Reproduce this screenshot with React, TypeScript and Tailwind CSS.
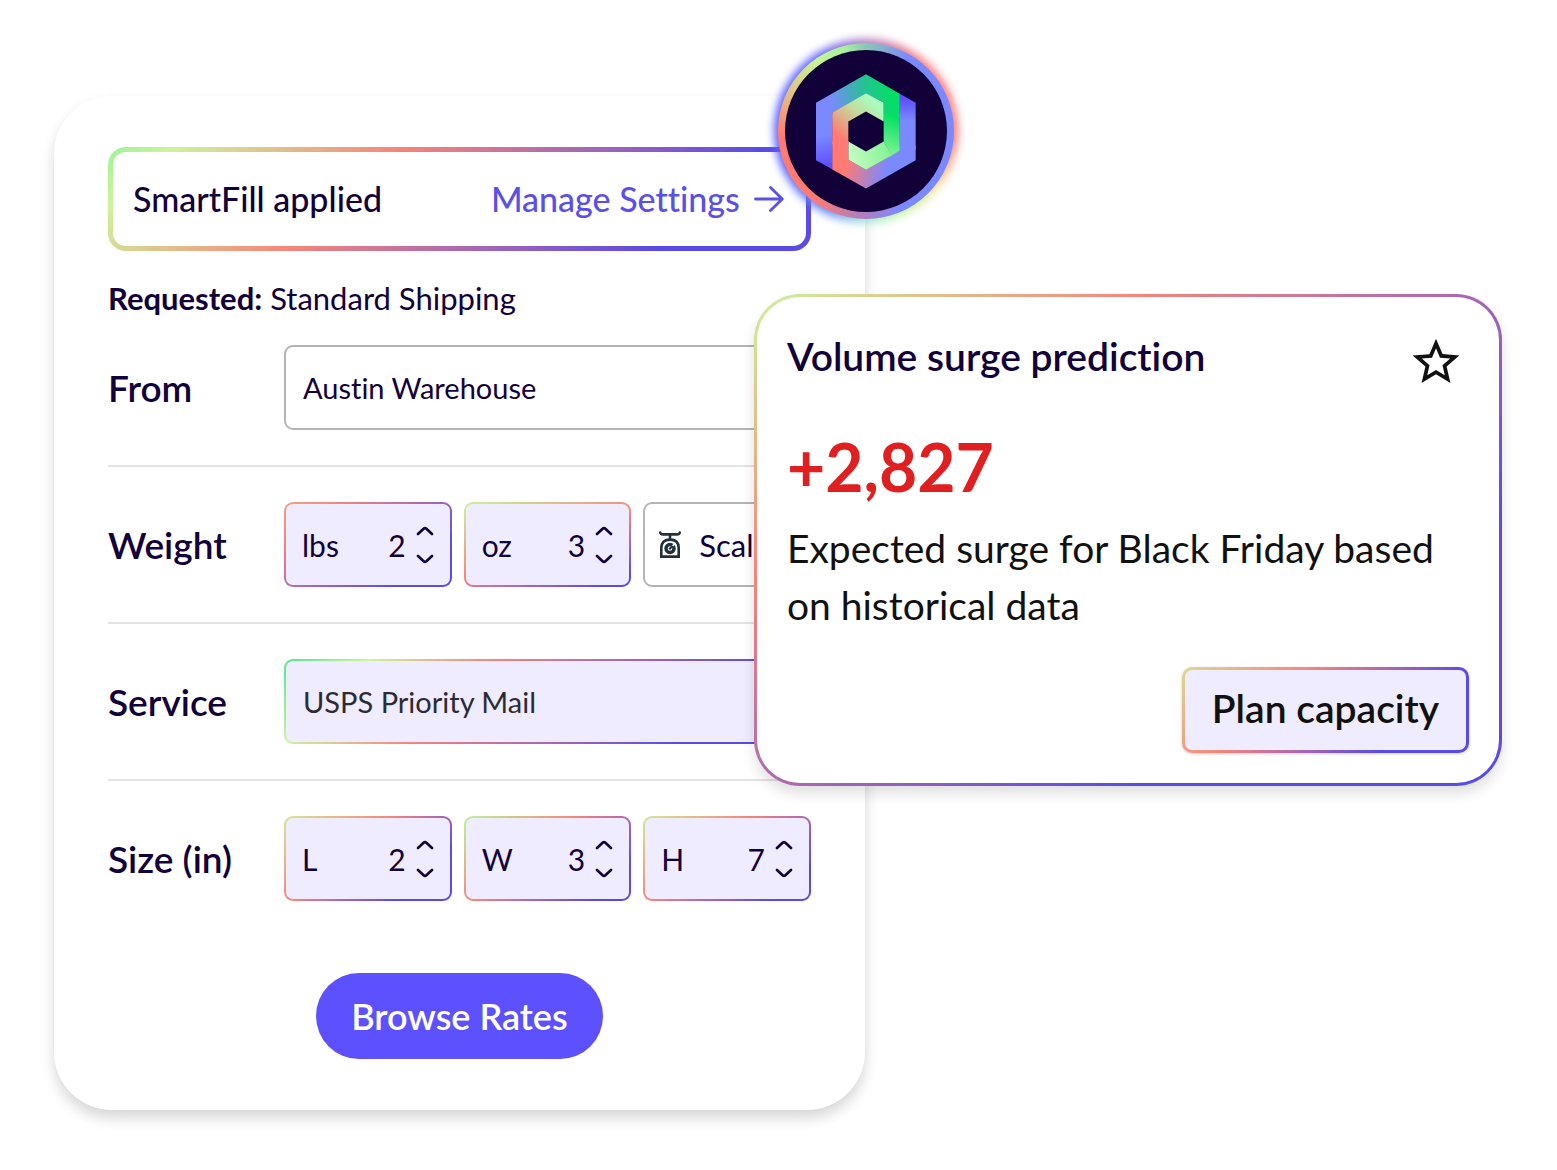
import { useState, type ReactNode } from "react";
import { MdStarOutline } from "react-icons/md";

const STEPPER_BG = {
  lbs: "[background:linear-gradient(#efecff,#efecff)_padding-box,linear-gradient(145deg,#efa582,#f5857a_20%,#5b4be6_80%)_border-box]",
  oz: "[background:linear-gradient(#efecff,#efecff)_padding-box,linear-gradient(158deg,#c8f596,#f5857a_50%,#5b4be6_92%)_border-box]",
  length: "[background:linear-gradient(#efecff,#efecff)_padding-box,linear-gradient(140deg,#d6e896,#f5857a_40%,#5b4be6_78%)_border-box]",
  width: "[background:linear-gradient(#efecff,#efecff)_padding-box,linear-gradient(140deg,#b8f594,#f5857a_42%,#5b4be6_84%)_border-box]",
  height: "[background:linear-gradient(#efecff,#efecff)_padding-box,linear-gradient(140deg,#d0ea98,#f5857a_40%,#5b4be6_84%)_border-box]",
};

interface StepperProps {
  id: keyof typeof STEPPER_BG;
  label: string;
  initial: number;
}

function Chevron({ down = false }: { down?: boolean }) {
  return (
    <svg viewBox="0 0 18 10" className="h-[10px] w-[18px]" fill="none" stroke="currentColor" strokeWidth="2.6" strokeLinecap="round">
      <path d={down ? "M2 2L7.6 7.3Q9 8.6 10.4 7.3L16 2" : "M2 8L7.6 2.7Q9 1.4 10.4 2.7L16 8"} />
    </svg>
  );
}

function Stepper({ id, label, initial }: StepperProps) {
  const [value, setValue] = useState(initial);

  return (
    <div className={`flex h-[85px] min-w-0 items-center rounded-[9px] border-2 border-transparent px-4 ${STEPPER_BG[id]}`}>
      <label htmlFor={id} className="text-[30px] leading-10">
        {label}
      </label>
      <input
        id={id}
        type="text"
        inputMode="numeric"
        value={value}
        onChange={(e) => setValue(Number(e.target.value) || 0)}
        className="min-w-0 flex-1 bg-transparent text-right text-[30px] leading-10 outline-none"
      />
      <div className="ml-[10px] flex flex-col gap-[18px]">
        <button type="button" aria-label={`Increase ${label}`} onClick={() => setValue(value + 1)}>
          <Chevron />
        </button>
        <button type="button" aria-label={`Decrease ${label}`} onClick={() => setValue(Math.max(0, value - 1))}>
          <Chevron down />
        </button>
      </div>
    </div>
  );
}

function ScaleIcon() {
  return (
    <svg viewBox="0 0 22 28" className="h-[28px] w-[22px] shrink-0" fill="none" stroke="#22303a" strokeWidth="2.6">
      <path d="M1.3 1.6Q1.6 3.4 4 3.4H18Q20.4 3.4 20.7 1.6" strokeLinecap="round" />
      <path d="M11 3.5V8" />
      <path d="M2.3 25.6V17Q2.3 8.6 11 8.6Q19.7 8.6 19.7 17V25.6Z" />
      <circle cx="11" cy="17.5" r="4" strokeWidth="3.4" />
      <path d="M11.5 17L16.5 12" stroke="#fff" strokeWidth="1.6" />
      <path d="M10.2 18.3L13.6 14.9" strokeWidth="2" />
    </svg>
  );
}

function HexLogo() {
  return (
    <svg viewBox="168 160 300 344" className="relative h-[115px] w-[100px]" aria-hidden="true">
      <defs>
        <linearGradient id="g-top" gradientUnits="userSpaceOnUse" x1="215" y1="265" x2="395" y2="215">
          <stop offset="0" stopColor="#7b89ff" />
          <stop offset="0.55" stopColor="#2bbd9c" />
          <stop offset="1" stopColor="#02e063" />
        </linearGradient>
        <linearGradient id="g-left" gradientUnits="userSpaceOnUse" x1="180" y1="345" x2="200" y2="435">
          <stop offset="0" stopColor="#7b89ff" />
          <stop offset="1" stopColor="#5d50ff" />
        </linearGradient>
        <linearGradient id="g-green" gradientUnits="userSpaceOnUse" x1="400" y1="285" x2="360" y2="410">
          <stop offset="0" stopColor="#02e063" />
          <stop offset="1" stopColor="#93f69b" />
        </linearGradient>
        <linearGradient id="g-hook" gradientUnits="userSpaceOnUse" x1="400" y1="370" x2="270" y2="400">
          <stop offset="0" stopColor="#7cf28d" />
          <stop offset="1" stopColor="#c3fac4" />
        </linearGradient>
        <linearGradient id="g-coral" gradientUnits="userSpaceOnUse" x1="240" y1="350" x2="335" y2="240">
          <stop offset="0" stopColor="#ff7a72" />
          <stop offset="0.6" stopColor="#c9d79b" />
          <stop offset="1" stopColor="#a9fcbf" />
        </linearGradient>
        <linearGradient id="g-bottom" gradientUnits="userSpaceOnUse" x1="265" y1="400" x2="385" y2="430">
          <stop offset="0" stopColor="#ff7a72" />
          <stop offset="1" stopColor="#7b89ff" />
        </linearGradient>
        <linearGradient id="g-right" gradientUnits="userSpaceOnUse" x1="445" y1="235" x2="445" y2="300">
          <stop offset="0" stopColor="#5d50ff" />
          <stop offset="1" stopColor="#7b89ff" />
        </linearGradient>
      </defs>
      <path fill="url(#g-left)" d="M168 280H218V446L168 418Z" />
      <path fill="url(#g-bottom)" d="M217 446V360H265V417L318 446L418 389V375H467V418L318 503Z" />
      <path fill="url(#g-right)" d="M418 218L467 246V385H418Z" />
      <path fill="url(#g-top)" d="M168 300V246L318 160L419 219V290H371V245L318 218L217 276V300Z" />
      <path fill="url(#g-green)" d="M371 279H419V390L395 404L371 362Z" />
      <path fill="url(#g-hook)" d="M371 362L318 392L265 362V417L318 447L396 403Z" />
      <path fill="url(#g-coral)" d="M217 371V275L318 217L371 245V302L318 272L265 302V371Z" />
    </svg>
  );
}

function BrandBadge() {
  return (
    <div className="absolute top-[-53px] right-[-89px] flex h-[176px] w-[176px] items-center justify-center">
      <span className="absolute -inset-1 rounded-full blur-[4px] [background:conic-gradient(#b07ac0,#ff7a7a_40deg,#ff7a7a_95deg,#f2e29a_130deg,#c3f7a8_155deg,#9fe5d5_180deg,#6b8cff_205deg,#5b62ff_250deg,#5b62ff_325deg,#b07ac0)]" />
      <span className="absolute inset-0 rounded-full [background:conic-gradient(#8bc7b4,#7b89ff_30deg,#7b89ff_155deg,#b27db8_185deg,#ff7a72_215deg,#ff7a72_265deg,#e5bd83_295deg,#c9f594_325deg,#a6f0a0_345deg,#8bc7b4)]" />
      <span className="absolute inset-[7px] rounded-full bg-[#120038]" />
      <HexLogo />
    </div>
  );
}

function FieldRow({ label, htmlFor, children }: { label: string; htmlFor: string; children: ReactNode }) {
  return (
    <div className="flex items-center border-b-2 border-[#e3e3e3] py-[35px] first:pt-0 last:border-b-0 last:pb-0">
      <label htmlFor={htmlFor} className="w-[176px] shrink-0 text-[37px] leading-10 font-semibold">
        {label}
      </label>
      <div className="min-w-0 flex-1">{children}</div>
    </div>
  );
}

function ShippingForm() {
  return (
    <form
      onSubmit={(e) => e.preventDefault()}
      className="relative w-[56%] shrink-0 rounded-[58px] bg-white px-[54px] pt-[51px] pb-[51px] shadow-[0_8px_14px_rgba(0,0,0,0.16)]"
    >
      <div className="flex h-[104px] items-center justify-between rounded-[18px] border-[5px] border-transparent pr-[22px] pl-5 [background:linear-gradient(#fff,#fff)_padding-box,linear-gradient(138deg,#9cf398,#cdf39b_8%,#f5857a_36%,#5b4be6_80%)_border-box]">
        <span className="text-[34px] leading-10 font-medium">SmartFill applied</span>
        <a href="#settings" className="flex items-center gap-[14px] text-[34px] leading-10 font-medium text-[#5b4fe9]">
          Manage Settings
          <svg viewBox="0 0 30 26" className="h-[26px] w-[30px]" fill="none" stroke="currentColor" strokeWidth="2.8" strokeLinecap="round" strokeLinejoin="round">
            <path d="M1.500 13H28M16.500 1.500L28.300 13L16.500 24.500" />
          </svg>
        </a>
      </div>

      <p className="my-[27px] text-[31px] leading-10">
        <strong className="font-bold">Requested:</strong> Standard Shipping
      </p>

      <div>
        <FieldRow label="From" htmlFor="from">
          <input
            id="from"
            type="text"
            defaultValue="Austin Warehouse"
            className="block h-[85px] w-full rounded-[9px] border-2 border-[#b4b4b4] bg-white px-[17px] text-[29px] leading-10 outline-none"
          />
        </FieldRow>
        <FieldRow label="Weight" htmlFor="lbs">
          <div className="grid grid-cols-3 gap-3">
            <Stepper id="lbs" label="lbs" initial={2} />
            <Stepper id="oz" label="oz" initial={3} />
            <button
              type="button"
              className="flex h-[85px] min-w-0 items-center gap-[18px] overflow-hidden rounded-[9px] border-2 border-[#b4b4b4] bg-white px-[14px] text-[31px] leading-10"
            >
              <ScaleIcon />
              Scale
            </button>
          </div>
        </FieldRow>
        <FieldRow label="Service" htmlFor="service">
          <select
            id="service"
            className="block h-[85px] w-full appearance-none rounded-[9px] border-2 border-transparent px-[17px] text-[29px] leading-10 text-[#2b2b33] outline-none [background:linear-gradient(#efecff,#efecff)_padding-box,linear-gradient(135deg,#4fe888,#cdf39b_14%,#f5857a_34%,#5b4be6_78%)_border-box]"
          >
            <option>USPS Priority Mail</option>
          </select>
        </FieldRow>
        <FieldRow label="Size (in)" htmlFor="length">
          <div className="grid grid-cols-3 gap-3">
            <Stepper id="length" label="L" initial={2} />
            <Stepper id="width" label="W" initial={3} />
            <Stepper id="height" label="H" initial={7} />
          </div>
        </FieldRow>
      </div>

      <div className="mt-[72px] flex justify-center">
        <button type="submit" className="h-[86px] w-[287px] rounded-full bg-[#5d50ff] text-[36px] leading-10 font-semibold text-white">
          Browse Rates
        </button>
      </div>

      <BrandBadge />
    </form>
  );
}

function SurgeCard() {
  return (
    <section className="relative mt-[198px] -ml-[111px] min-w-0 flex-1 rounded-[46px] border-[3px] border-transparent px-[30px] pt-[39px] pb-[30px] shadow-[0_8px_14px_rgba(0,0,0,0.12)] [background:linear-gradient(#fff,#fff)_padding-box,linear-gradient(144deg,#cdf39b,#f5857a_27%,#5b4be6_74%)_border-box]">
      <div className="flex items-start justify-between">
        <h2 className="text-[39px] leading-10 font-semibold">Volume surge prediction</h2>
        <button type="button" aria-label="Add to favourites" className="mr-[5px] -mt-[2px] text-[#111]">
          <MdStarOutline className="size-14" />
        </button>
      </div>
      <p className="mt-[33px] text-[66px] leading-[88px] font-bold text-[#e02020]">+2,827</p>
      <p className="mt-[9px] text-[39px] leading-[57px] text-[#111]">Expected surge for Black Friday based on historical data</p>
      <div className="mt-[33px] flex justify-end">
        <button
          type="button"
          className="h-[86px] w-[287px] rounded-[10px] border-[3px] border-transparent pb-1 text-[39px] leading-10 font-semibold text-[#111] shadow-[0_1px_3px_rgba(0,0,0,0.2)] [background:linear-gradient(#efecff,#efecff)_padding-box,linear-gradient(137deg,#d9dc92,#f5857a_34%,#5b4be6_76%)_border-box]"
        >
          Plan capacity
        </button>
      </div>
    </section>
  );
}

export default function App() {
  return (
    <main className="flex min-h-screen items-start bg-white pt-24 pr-[55px] pb-[60px] pl-[54px] font-['Lato','Open_Sans',sans-serif] text-[#12003a] [font-variant-ligatures:none]">
      <ShippingForm />
      <SurgeCard />
    </main>
  );
}
